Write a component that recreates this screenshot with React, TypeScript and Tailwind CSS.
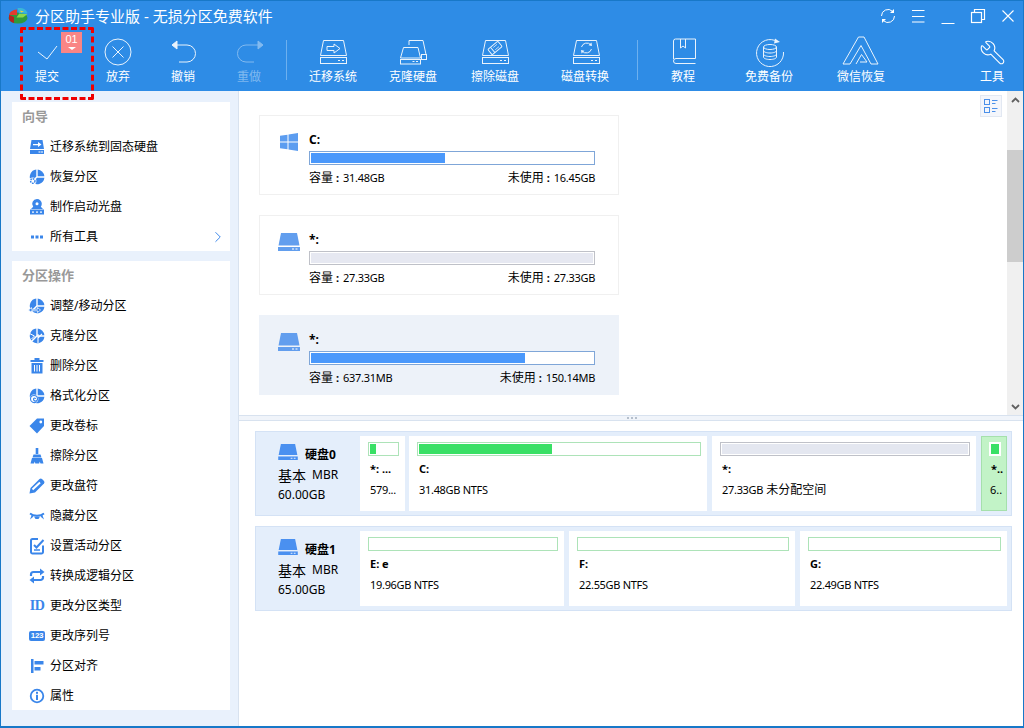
import React from "react";
import { Wrench, ChevronRight } from "lucide-react";

const font = "font-['Noto_Sans','Noto_Sans_CJK_SC',sans-serif]";

const Ico = ({ children }: { children: React.ReactNode }) => (
  <svg width="16" height="16" viewBox="0 0 16 16" fill="#3a86ea" className="overflow-visible">
    {children}
  </svg>
);

const Pie = () => (
  <>
    <path d="M7.3 .6V7.5L2.4 12.4A7.3 7.3 0 0 1 7.3 .6z" />
    <path d="M8.7 .6A7.3 7.3 0 0 1 15.4 7.3H8.7z" />
    <path d="M15.4 8.7A7.3 7.3 0 0 1 3.4 13.4L8.1 8.7z" />
  </>
);

const sideIcons: Record<string, React.ReactNode> = {
  migrate: (
    <Ico>
      <path d="M2.5 1h11L15 10H1z" />
      <rect x="1" y="11" width="14" height="4" />
      <path d="M4 5h5V3l3.5 2.5L9 8V6.2H4z" fill="#fff" />
      <rect x="9.5" y="12.5" width="2" height="1" fill="#fff" />
      <rect x="12" y="12.5" width="2" height="1" fill="#fff" />
    </Ico>
  ),
  restore: (
    <Ico>
      <Pie />
      <circle cx="3.8" cy="12" r="3.6" fill="#fff" />
      <circle cx="3.8" cy="12" r="2.2" fill="none" stroke="#3a86ea" strokeWidth="1.4" strokeDasharray="1.6 .7" />
    </Ico>
  ),
  boot: (
    <Ico>
      <path d="M8 0a4.8 4.8 0 0 1 4.8 4.8c0 1.2-.4 2.2-1 3L14 10H2l2.200-2.200a4.800 4.800 0 0 1 3.800-7.800z" />
      <circle cx="8" cy="4.800" r="1.500" fill="#fff" />
      <rect x="1" y="10.500" width="14" height="5" />
      <rect x="3" y="12.500" width="2" height="1.200" fill="#fff" />
      <rect x="7" y="12.500" width="2" height="1.200" fill="#fff" />
      <rect x="11" y="12.500" width="2" height="1.200" fill="#fff" />
    </Ico>
  ),
  dots: (
    <Ico>
      <rect x="2" y="6.500" width="3" height="3" />
      <rect x="6.500" y="6.500" width="3" height="3" />
      <rect x="11" y="6.500" width="3" height="3" />
    </Ico>
  ),
  resize: (
    <Ico>
      <Pie />
      <path d="M-.5 12l3-2.500v1.700h6V9.500l3 2.500-3 2.500v-1.700h-6v1.700z" stroke="#fff" strokeWidth=".7" />
    </Ico>
  ),
  clone: (
    <Ico>
      <Pie />
      <path d="M9 6v9M9 10l4-4" stroke="#fff" strokeWidth="1.100" fill="none" />
      <path d="M.5 5.500l5 2.500-3 3" stroke="#fff" strokeWidth="1" fill="none" />
    </Ico>
  ),
  trash: (
    <Ico>
      <rect x="5.500" y="0" width="5" height="2" />
      <rect x="1.500" y="2" width="13" height="2" />
      <path d="M2.500 5h11v10.500h-11z" />
      <path d="M5.500 7v6.500M8 7v6.500M10.500 7v6.500" stroke="#fff" strokeWidth="1" />
    </Ico>
  ),
  format: (
    <Ico>
      <Pie />
      <circle cx="5" cy="11" r="4.400" fill="#fff" />
      <path d="M1.500 11a3.500 3.500 0 0 1 7 0a2 2 0 0 1-4 0a1 1 0 0 1 2 0" fill="none" stroke="#3a86ea" strokeWidth="1.100" />
      <path d="M1.500 11a3.500 3.500 0 0 0 6 2.500" fill="none" stroke="#3a86ea" strokeWidth="1.100" />
    </Ico>
  ),
  tag: (
    <Ico>
      <path d="M8 .5h7v7.500l-7 7.500L.5 8z" />
      <circle cx="11.800" cy="4" r="1.400" fill="#fff" />
    </Ico>
  ),
  brush: (
    <Ico>
      <rect x="6.700" y="0" width="2.600" height="6" />
      <path d="M4.500 6.500h7l1 3h-9z" />
      <path d="M3 10h10l1.500 5.500h-3l-.8-2-.5 2H6.300l-.5-2-.8 2h-3.500z" />
    </Ico>
  ),
  pencil: (
    <Ico>
      <path d="M.5 15.500l1-5.500L10.500 1a2 2 0 0 1 2.500 0l2 2a2 2 0 0 1 0 2.500L6 14.500z" />
      <path d="M3.500 11.500L11 4.500" stroke="#fff" strokeWidth="2" />
    </Ico>
  ),
  eye: (
    <Ico>
      <path d="M1 5.500c3.500 3 10.500 3 14 0" fill="none" stroke="#3a86ea" strokeWidth="1.800" />
      <path d="M1 5l1.500 2.500-1.500 4 3-2.500.8-1.500M15 5l-1.500 2.500 1.500 4-3-2.500-.8-1.500" />
      <path d="M5 8.500h6L9.500 11h-3z" />
    </Ico>
  ),
  check: (
    <Ico>
      <path d="M14 7.500V14a1.500 1.500 0 0 1-1.500 1.500h-9A1.500 1.500 0 0 1 2 14V2.500A1.500 1.500 0 0 1 3.500 1H9" fill="none" stroke="#3a86ea" strokeWidth="2" />
      <path d="M5 7l2.500 2.500L14.500 2" fill="none" stroke="#3a86ea" strokeWidth="2" />
      <path d="M5 12h6" stroke="#3a86ea" strokeWidth="1.500" />
    </Ico>
  ),
  convert: (
    <Ico>
      <path d="M2 8V6.500A2.500 2.500 0 0 1 4.500 4H12" fill="none" stroke="#3a86ea" strokeWidth="2.200" />
      <path d="M11 .5L15.500 4 11 7.500z" />
      <path d="M14 8v1.500a2.500 2.500 0 0 1-2.500 2.500H4" fill="none" stroke="#3a86ea" strokeWidth="2.200" />
      <path d="M5 8.500L.5 12 5 15.500z" />
    </Ico>
  ),
  id: <span className="text-[14px] leading-none font-black text-[#3a86ea] font-['Liberation_Serif',serif] tracking-[-0.5px]">ID</span>,
  serial: (
    <span className="w-[16px] h-[10px] rounded-[2px] bg-[#3a86ea] text-white text-[8px] leading-[10px] font-bold text-center font-['Liberation_Sans',sans-serif] tracking-[-0.3px]">
      123
    </span>
  ),
  align: (
    <Ico>
      <rect x="2" y="1" width="2.500" height="14" />
      <rect x="5.500" y="3" width="9" height="3.500" />
      <rect x="5.500" y="9" width="6" height="3.500" />
    </Ico>
  ),
  info: (
    <Ico>
      <circle cx="8" cy="8" r="6.300" fill="none" stroke="#3a86ea" strokeWidth="1.800" />
      <rect x="7" y="3.800" width="2" height="2" />
      <rect x="7" y="6.800" width="2" height="5.200" />
    </Ico>
  ),
};

const guide = [
  { icon: "migrate", label: "迁移系统到固态硬盘" },
  { icon: "restore", label: "恢复分区" },
  { icon: "boot", label: "制作启动光盘" },
  { icon: "dots", label: "所有工具", more: true },
];

const ops = [
  { icon: "resize", label: "调整/移动分区" },
  { icon: "clone", label: "克隆分区" },
  { icon: "trash", label: "删除分区" },
  { icon: "format", label: "格式化分区" },
  { icon: "tag", label: "更改卷标" },
  { icon: "brush", label: "擦除分区" },
  { icon: "pencil", label: "更改盘符" },
  { icon: "eye", label: "隐藏分区" },
  { icon: "check", label: "设置活动分区" },
  { icon: "convert", label: "转换成逻辑分区" },
  { icon: "id", label: "更改分区类型" },
  { icon: "serial", label: "更改序列号" },
  { icon: "align", label: "分区对齐" },
  { icon: "info", label: "属性" },
];

const ToolSvg = ({ children, dim }: { children: React.ReactNode; dim?: boolean }) => (
  <svg
    width="32"
    height="28"
    viewBox="0 0 32 28"
    fill="none"
    stroke="#fff"
    strokeWidth="1"
    className={dim ? "overflow-visible opacity-40" : "overflow-visible opacity-90"}
  >
    {children}
  </svg>
);

const HddOutline = ({ x = 3, children }: { x?: number; children?: React.ReactNode }) => (
  <g transform={`translate(${x} 0)`}>
    <path d="M3.500 2.500H23.500L26.500 17.500H.5z" />
    <rect x=".5" y="19.500" width="26" height="6" />
    <path d="M18 22.500h2M22 22.500h2" />
    {children}
  </g>
);

const tools = [
  {
    label: "提交",
    cls: "ml-[16px]",
    icon: <ToolSvg><path d="M7 14l9 7 10-13" /></ToolSvg>,
  },
  {
    label: "放弃",
    cls: "ml-[11px]",
    icon: (
      <ToolSvg>
        <circle cx="16" cy="14" r="13" />
        <path d="M10.500 8.500l11 11M21.500 8.500l-11 11" />
      </ToolSvg>
    ),
  },
  {
    label: "撤销",
    cls: "ml-[5px]",
    icon: (
      <ToolSvg>
        <path d="M5 7l5-4v8z" fill="#fff" />
        <path d="M10 7H20a8.500 8.500 0 0 1 0 17H12" />
      </ToolSvg>
    ),
  },
  {
    label: "重做",
    cls: "ml-[6px]",
    dim: true,
    icon: (
      <ToolSvg dim>
        <path d="M30 7l-5-4v8z" fill="#fff" />
        <path d="M25 7H13a8.500 8.500 0 0 0 0 17H21" />
      </ToolSvg>
    ),
  },
  { sep: true, cls: "ml-[7px]" },
  {
    label: "迁移系统",
    cls: "ml-[16px]",
    icon: (
      <ToolSvg>
        <HddOutline>
          <path d="M7 8.500h7V6l6 4.500-6 4.500v-2.500H7z" />
        </HddOutline>
      </ToolSvg>
    ),
  },
  {
    label: "克隆硬盘",
    cls: "ml-[20px]",
    icon: (
      <ToolSvg>
        <path d="M12 7V2.500H26L29 16.500H24" />
        <rect x="24.500" y="16.500" width="5" height="5" />
        <path d="M6.500 9.500H21L23.500 20H3.500z" />
        <rect x="3.500" y="21.500" width="20" height="4.500" />
        <path d="M15.500 23.500h2M19 23.500h2" />
      </ToolSvg>
    ),
  },
  {
    label: "擦除磁盘",
    cls: "ml-[22px]",
    icon: (
      <ToolSvg>
        <HddOutline>
          <g transform="rotate(-40 13 10)">
            <rect x="6.500" y="6.500" width="13" height="7" rx="1" />
            <path d="M10 6.500v7" />
            <path d="M12 8.500h5M12 11.500h5" strokeWidth=".7" />
          </g>
        </HddOutline>
      </ToolSvg>
    ),
  },
  {
    label: "磁盘转换",
    cls: "ml-[30px]",
    icon: (
      <ToolSvg>
        <HddOutline x={4}>
          <path d="M8.500 9a5.500 5.500 0 0 1 9.500-2" />
          <path d="M19 8l-3.500-.8L18.500 4.500z" fill="#fff" stroke="none" />
          <path d="M18.500 11a5.500 5.500 0 0 1-9.500 2" />
          <path d="M8 12l3.500.8L8.500 15.500z" fill="#fff" stroke="none" />
        </HddOutline>
      </ToolSvg>
    ),
  },
  { sep: true, cls: "ml-[22px]" },
  {
    label: "教程",
    cls: "ml-[15px]",
    icon: (
      <ToolSvg>
        <path d="M6.500 21V3a2 2 0 0 1 2-2H28.500V20.500H9a2.500 2.500 0 0 0 0 5H28.500" />
        <path d="M13.500 1V10L16 8l2.500 2V1" />
      </ToolSvg>
    ),
  },
  {
    label: "免费备份",
    cls: "ml-[26px]",
    icon: (
      <ToolSvg>
        <path d="M24 3.500A13.500 13.500 0 1 0 30.500 14" />
        <path d="M22 .5l5 3.500-6 1.500z" fill="#fff" stroke="none" />
        <ellipse cx="17" cy="9" rx="6.500" ry="2.500" />
        <path d="M10.500 9v10c0 1.500 3 2.500 6.500 2.500s6.500-1 6.500-2.500V9" />
        <path d="M10.500 12.500c0 1.500 3 2.500 6.500 2.500s6.500-1 6.500-2.500M10.500 16c0 1.500 3 2.500 6.500 2.500s6.500-1 6.500-2.500" />
      </ToolSvg>
    ),
  },
  {
    label: "微信恢复",
    cls: "ml-[32px]",
    icon: (
      <ToolSvg>
        <path d="M-2 26L13.500-1H19L33 26H26L16 7.500 5 26z" />
        <path d="M11 26L16.500 16.500 22 24H15" />
      </ToolSvg>
    ),
  },
  {
    label: "工具",
    cls: "ml-[71px]",
    icon: <Wrench size={27} strokeWidth={1} color="#fff" className="-scale-x-100 mt-[1px]" />,
  },
];

const Logo = () => (
  <svg width="20" height="17" viewBox="0 0 20 17">
    <ellipse cx="10" cy="11" rx="9.500" ry="5.500" fill="#2f9a3c" />
    <path d="M1 8a9 6.500 0 0 1 8-5.500V8z" fill="#e23b2e" />
    <path d="M1 8v3.500c0 2 2.500 4 5 4.500V10z" fill="#b4231f" />
    <path d="M9.500 1h2c4 0 7.500 2 8 5.500H11z" fill="#39b6d8" />
    <path d="M11 7h8.500L15 10.500H8.500z" fill="#8cd84a" />
    <path d="M12 3.500l4 1-3 1z" fill="#f3d23a" />
  </svg>
);

const TitleButtons = () => (
  <div className="flex">
    <div className="w-[30px] flex justify-center">
      <svg width="16" height="16" viewBox="0 0 16 16" fill="none" stroke="#fff">
        <path d="M1.500 8A6.500 6.500 0 0 1 12.500 3.300" />
        <path d="M14.500 8A6.500 6.500 0 0 1 3.500 12.700" />
        <path d="M14 1v4h-4zM2 15v-4h4z" fill="#fff" stroke="none" />
      </svg>
    </div>
    <div className="w-[30px] flex justify-center">
      <svg width="16" height="16" viewBox="0 0 16 16" stroke="#fff">
        <path d="M2 2.500h12.500M2 8.500h12.500M2 14h12.500" />
      </svg>
    </div>
    <div className="w-[30px] flex justify-center">
      <svg width="16" height="16" viewBox="0 0 16 16" stroke="#fff">
        <path d="M1.500 15.500h13" />
      </svg>
    </div>
    <div className="w-[30px] flex justify-center">
      <svg width="16" height="16" viewBox="0 0 16 16" fill="none" stroke="#fff" strokeWidth="1.200">
        <rect x="1.500" y="4.500" width="10" height="10" />
        <path d="M4.500 4.500V1.500H14.500V11.500H11.500" />
      </svg>
    </div>
    <div className="w-[30px] flex justify-center">
      <svg width="16" height="16" viewBox="0 0 16 16" stroke="#fff" strokeWidth="1.100">
        <path d="M2.500 2.500l11 11M13.500 2.500l-11 11" />
      </svg>
    </div>
  </div>
);

const Header = () => (
  <div className="h-[90px] bg-[#2e8ce6] text-white flex flex-col">
    <div className="h-[29px] flex items-center pl-[7px]">
      <Logo />
      <span className="ml-[7px] flex-1 text-[15px] leading-[18px]">分区助手专业版 - 无损分区免费软件</span>
      <TitleButtons />
    </div>
    <div className="flex pt-[8px]">
      {tools.map((t, i) =>
        t.sep ? (
          <div key={i} className={`w-px h-[40px] mt-[2px] bg-[#6db0ef] ${t.cls}`} />
        ) : (
          <div key={i} className={`w-[60px] flex flex-col items-center ${t.cls}`}>
            <div className="h-[28px] flex items-center justify-center">{t.icon}</div>
            <div className={t.dim ? "mt-[3px] h-[16px] text-[12px] leading-[16px] text-white/40" : "mt-[3px] h-[16px] text-[12px] leading-[16px]"}>
              {t.label}
            </div>
          </div>
        )
      )}
    </div>
  </div>
);

const SideRow = ({ icon, label, more }: { icon: string; label: string; more?: boolean }) => (
  <div className="h-[30px] flex items-center pt-[2px]">
    <div className="w-[38px] pl-[12px] flex items-center justify-center">{sideIcons[icon]}</div>
    <span className="text-[12px] text-black">{label}</span>
    {more && <ChevronRight size={18} strokeWidth={1.3} color="#3a86ea" className="ml-auto mr-[3px]" />}
  </div>
);

const Sidebar = () => (
  <div className="w-[238px] shrink-0 bg-[#e9f1fc] border-r border-[#d8e2ef] pl-[11px] pt-[11px] flex flex-col gap-[10px]">
    <div className="w-[218px] bg-white">
      <div className="h-[29px] pl-[10px] flex items-center text-[13px] font-bold text-[#999]">向导</div>
      {guide.map((r) => (
        <SideRow key={r.label} {...r} />
      ))}
    </div>
    <div className="w-[218px] bg-white">
      <div className="h-[29px] pl-[10px] flex items-center text-[13px] font-bold text-[#999]">分区操作</div>
      {ops.map((r) => (
        <SideRow key={r.label} {...r} />
      ))}
    </div>
  </div>
);

const WinIcon = () => (
  <svg width="20" height="18" viewBox="0 0 20 18" fill="#5c9df0" className="ml-[1px]">
    <path d="M1 2.800L8.500 1.700V8.500H1zM9.500 1.500L19 0V8.500H9.500zM1 9.500H8.500V16.300L1 15.200zM9.500 9.500H19V18L9.500 16.500z" />
  </svg>
);

const DiskIcon = ({ color = "#629eee", w = 22, h = 18 }: { color?: string; w?: number; h?: number }) => (
  <svg width={w} height={h} viewBox="0 0 22 18" fill={color}>
    <path d="M3 0H19L21.500 12.500H.5z" />
    <rect x="0" y="14" width="22" height="4" />
    <rect x="14" y="15.500" width="2" height="1" fill="#fff" />
    <rect x="17.500" y="15.500" width="2" height="1" fill="#fff" />
  </svg>
);

const volumes = [
  { name: "C:", total: "31.48GB", free: "16.45GB", win: true, barCls: "border-[#7fa6d8]", fill: "47.5%" },
  { name: "*:", total: "27.33GB", free: "27.33GB", barCls: "border-[#bfc1c8]", empty: true },
  { name: "*:", total: "637.31MB", free: "150.14MB", selected: true, barCls: "border-[#7fa6d8]", fill: "76%" },
];

const Stat = ({ label, value }: { label: string; value: string }) => (
  <span className="flex items-center">
    <span>{label}</span>
    <span className="ml-[3px] mr-[4px] text-[11px] font-bold">:</span>
    <span className="text-[11px] tracking-[-0.3px]">{value}</span>
  </span>
);

const VolumeTile = ({ v }: { v: (typeof volumes)[number] }) => (
  <div className={v.selected ? "w-[360px] h-[80px] bg-[#edf2f9] flex pl-[19px] pt-[17px]" : "w-[360px] h-[80px] border border-[#f0f0f0] flex pl-[18px] pt-[16px]"}>
    <div className="w-[31px] pt-[1px]">{v.win ? <WinIcon /> : <DiskIcon />}</div>
    <div className="w-[286px]">
      <div className="h-[16px] text-[12px] leading-[16px] font-bold text-black">{v.name}</div>
      <div className={`mt-[3px] h-[14px] border p-px ${v.barCls} ${v.selected || !v.empty ? "bg-white" : ""}`}>
        {v.empty ? (
          <div className="h-full bg-[#e6e8f1]" />
        ) : (
          <div className="h-full bg-[#4a98fb]" style={{ width: v.fill }} />
        )}
      </div>
      <div className="mt-[5px] h-[16px] flex justify-between text-[12px] leading-[16px] text-black">
        <Stat label="容量" value={v.total} />
        <Stat label="未使用" value={v.free} />
      </div>
    </div>
  </div>
);

const Scrollbar = () => (
  <div className="w-[16px] shrink-0 bg-[#f0f0f0] flex flex-col">
    <div className="h-[17px] flex items-center justify-center">
      <svg width="9" height="6" viewBox="0 0 9 6" fill="none" stroke="#606060" strokeWidth="1.800">
        <path d="M1 5l3.500-3.500L8 5" />
      </svg>
    </div>
    <div className="mt-[42px] h-[112px] bg-[#cdcdcd]" />
    <div className="mt-auto h-[17px] flex items-center justify-center">
      <svg width="9" height="6" viewBox="0 0 9 6" fill="none" stroke="#606060" strokeWidth="1.800">
        <path d="M1 1l3.500 3.500L8 1" />
      </svg>
    </div>
  </div>
);

const ViewToggle = () => (
  <div className="absolute right-[21px] top-[4px] w-[22px] h-[22px] bg-[#f4f6fb] border border-[#e2e8f2] flex items-center justify-center">
    <svg width="14" height="14" viewBox="0 0 14 14" fill="none" stroke="#4a90ea">
      <rect x=".5" y=".5" width="5" height="5" />
      <rect x=".5" y="8.500" width="5" height="5" />
      <path d="M8 1.500h5.500M8 4.500h3.500M8 9.500h5.500M8 12.500h3.500" />
    </svg>
  </div>
);

type Part = {
  cls: string;
  name?: string;
  detail?: string;
  note?: string;
  fill?: string;
  kind?: "gray" | "green";
};

const PartBar = ({ p }: { p: Part }) => (
  <div className={p.kind === "gray" ? "h-[14px] border border-[#bfc1c8] p-px" : "h-[14px] border border-[#ade3b8] p-px"}>
    {p.kind === "gray" ? (
      <div className="h-full bg-[#e4e7f0]" />
    ) : p.fill ? (
      <div className="h-full bg-[#39e065]" style={{ width: p.fill }} />
    ) : null}
  </div>
);

const PartCard = ({ p }: { p: Part }) => (
  <div className={`h-[75px] bg-white shrink-0 pl-[8px] pr-[6px] pt-[6px] overflow-hidden ${p.cls}`}>
    <PartBar p={p} />
    <div className="mt-[5px] ml-[2px] h-[16px] text-[11px] leading-[16px] font-bold text-black whitespace-nowrap">{p.name}</div>
    <div className="mt-[5px] ml-[2px] h-[16px] text-[11px] leading-[16px] tracking-[-0.3px] text-black whitespace-nowrap">
      {p.detail}
      {p.note && <span className="ml-[3px] text-[12px] tracking-normal">{p.note}</span>}
    </div>
  </div>
);

const disks = [
  {
    title: "硬盘0",
    size: "60.00GB",
    parts: [
      { cls: "w-[45px]", name: "*: ...", detail: "579...", fill: "22%" },
      { cls: "w-[298px] ml-[4px]", name: "C:", detail: "31.48GB NTFS", fill: "47.500%" },
      { cls: "w-[264px] ml-[5px]", name: "*:", detail: "27.33GB", note: "未分配空间", kind: "gray" as const },
    ],
    tail: true,
  },
  {
    title: "硬盘1",
    size: "65.00GB",
    parts: [
      { cls: "w-[204px]", name: "E: e", detail: "19.96GB NTFS" },
      { cls: "w-[226px] ml-[5px]", name: "F:", detail: "22.55GB NTFS" },
      { cls: "w-[207px] ml-[5px]", name: "G:", detail: "22.49GB NTFS" },
    ],
  },
];

const DiskRow = ({ d }: { d: (typeof disks)[number] }) => (
  <div className="w-[757px] h-[85px] bg-[#e4eefb] border border-[#d4e2f5] p-[4px] flex">
    <div className="w-[100px] shrink-0 pl-[18px] pt-[6px]">
      <div className="flex items-center h-[20px]">
        <DiskIcon color="#4a90f0" w={20} h={16} />
        <span className="ml-[7px] mt-[5px] text-[12px] font-bold text-black">{d.title}</span>
      </div>
      <div className="mt-[3px] h-[20px] flex items-center text-black">
        <span className="text-[14px]">基本</span>
        <span className="ml-[6px] text-[12px]">MBR</span>
      </div>
      <div className="mt-[1px] h-[18px] text-[12px] leading-[18px] text-black">{d.size}</div>
    </div>
    {d.parts.map((p) => (
      <PartCard key={p.name} p={p} />
    ))}
    {d.tail && (
      <div className="w-[26px] h-[75px] ml-[5px] shrink-0 bg-[#c2f3c7] border border-[#a5e0ac] pt-[5px] overflow-hidden">
        <div className="ml-[7px] w-[12px] h-[14px] bg-white p-[2px]">
          <div className="h-full bg-[#39e065]" />
        </div>
        <div className="mt-[5px] ml-[9px] h-[16px] text-[11px] leading-[16px] font-bold text-black">*..</div>
        <div className="mt-[5px] ml-[8px] h-[16px] text-[11px] leading-[16px] text-black">6..</div>
      </div>
    )}
  </div>
);

export default function App() {
  return (
    <div className={`relative w-[1024px] h-[728px] overflow-hidden bg-white flex flex-col border border-b-2 border-[#1878c8] ${font}`}>
      <Header />
      <div className="flex-1 flex min-h-0">
        <Sidebar />
        <div className="flex-1 flex flex-col min-w-0">
          <div className="relative h-[324px] flex">
            <div className="flex-1 pl-[20px] pt-[24px] flex flex-col gap-[20px]">
              {volumes.map((v, i) => (
                <VolumeTile key={i} v={v} />
              ))}
            </div>
            <ViewToggle />
            <Scrollbar />
          </div>
          <div className="h-[6px] bg-[#f0f4fa] border-y border-[#d8e2ef] flex items-center justify-center">
            <div className="flex gap-[2px] ml-[2px]">
              <div className="w-[2px] h-[2px] bg-[#b5bfcc]" />
              <div className="w-[2px] h-[2px] bg-[#b5bfcc]" />
              <div className="w-[2px] h-[2px] bg-[#b5bfcc]" />
            </div>
          </div>
          <div className="flex-1 pl-[16px] pt-[10px] flex flex-col gap-[10px]">
            {disks.map((d) => (
              <DiskRow key={d.title} d={d} />
            ))}
          </div>
        </div>
      </div>
      <div className="absolute left-[19px] top-[26px] w-[74px] h-[73px] border-[3px] border-dashed border-[#f00000] rounded-[2px]" />
      <div className="absolute left-[60px] top-[31px] w-[21px] h-[21px] bg-[#f98585] text-white text-[11px] leading-[14px] text-center font-['Liberation_Sans',sans-serif]">
        01
        <div className="mx-auto mt-[1px] w-0 h-0 border-x-[4px] border-x-transparent border-t-[3px] border-t-white" />
      </div>
    </div>
  );
}
